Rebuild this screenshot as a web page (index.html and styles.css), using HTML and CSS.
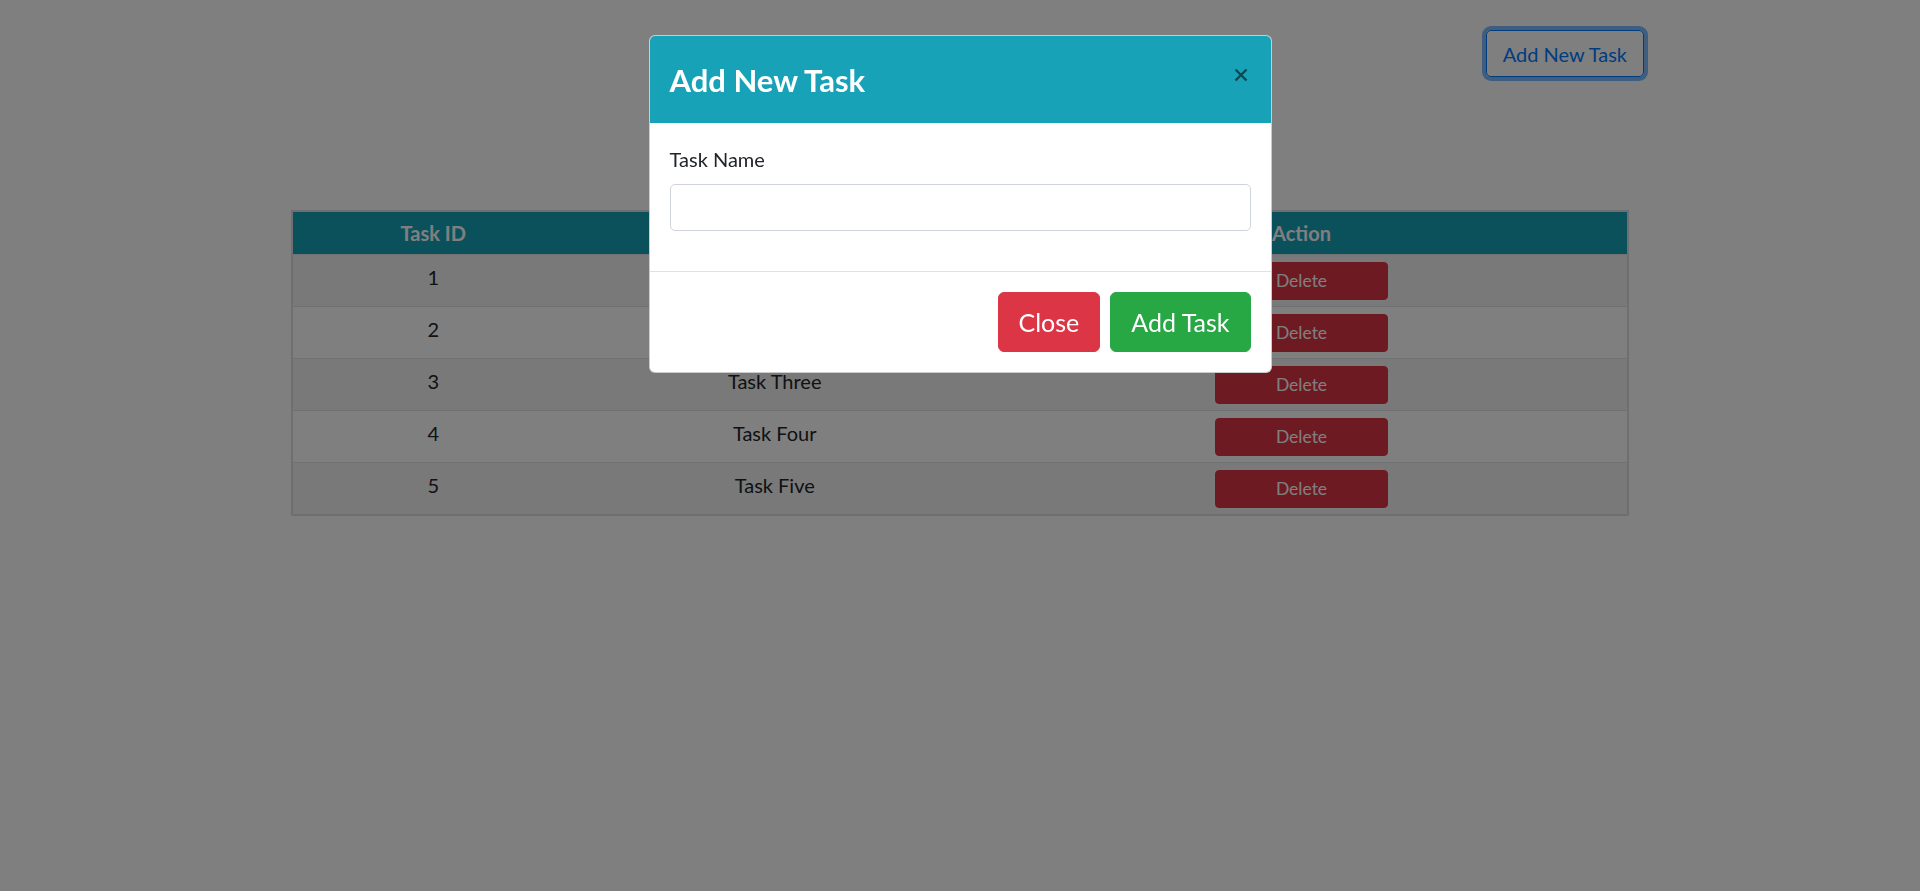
FILE: index.html
```html
<!DOCTYPE html>
<html lang="en">
<head>
<meta charset="utf-8">
<title>Tasks</title>
<link rel="stylesheet" href="styles.css">
</head>
<body>
<div class="page">
  <div class="topbar">
    <button class="btn btn-outline-primary" type="button">Add New Task</button>
  </div>
  <table class="tasks">
    <colgroup>
      <col class="col-id">
      <col class="col-name">
      <col class="col-action">
    </colgroup>
    <thead>
      <tr><th>Task ID</th><th>Task Name</th><th>Action</th></tr>
    </thead>
    <tbody>
      <tr><td>1</td><td>Task One</td><td><button class="btn-delete" type="button">Delete</button></td></tr>
      <tr><td>2</td><td>Task Two</td><td><button class="btn-delete" type="button">Delete</button></td></tr>
      <tr><td>3</td><td>Task Three</td><td><button class="btn-delete" type="button">Delete</button></td></tr>
      <tr><td>4</td><td>Task Four</td><td><button class="btn-delete" type="button">Delete</button></td></tr>
      <tr><td>5</td><td>Task Five</td><td><button class="btn-delete" type="button">Delete</button></td></tr>
    </tbody>
  </table>
</div>

<div class="backdrop"></div>

<div class="modal">
  <div class="modal-header">
    <h2 class="modal-title">Add New Task</h2>
    <button class="modal-close" type="button" aria-label="Close">
      <svg width="14" height="14" viewBox="0 0 14 14"><path d="M1.5 1.5 L12.5 12.5 M12.5 1.5 L1.5 12.5" stroke="#000" stroke-width="2.4" stroke-linecap="butt" fill="none"/></svg>
    </button>
  </div>
  <div class="modal-body">
    <label class="field-label" for="taskName">Task Name</label>
    <input class="field-input" id="taskName" type="text">
  </div>
  <div class="modal-footer">
    <button class="btn-lg btn-danger" type="button">Close</button>
    <button class="btn-lg btn-success" type="button">Add Task</button>
  </div>
</div>
</body>
</html>
```
FILE: styles.css
```css
* { box-sizing: border-box; }

html, body {
  margin: 0;
  padding: 0;
  background: #ffffff;
}

body {
  font-family: Lato, "Noto Sans", "Liberation Sans", sans-serif;
  font-size: 20px;
  line-height: 1.5;
  color: #212529;
  height: 891px;
  overflow: hidden;
}

.page {
  width: 100%;
}

.topbar {
  max-width: 1368px;
  margin: 0 auto;
  padding-top: 30px;
  display: flex;
  justify-content: flex-end;
}

.btn {
  font-family: inherit;
  font-size: 20px;
  line-height: 30px;
  padding: 7.5px 16px;
  border-radius: 5px;
  background: transparent;
  cursor: pointer;
}

.btn-outline-primary {
  color: #007bff;
  border: 1px solid #007bff;
  box-shadow: 0 0 0 4px rgba(0, 123, 255, 0.5);
}

.tasks {
  width: 1338px;
  margin: 133px auto 0;
  border-collapse: collapse;
  table-layout: fixed;
  border: 2px solid #dcdfe2;
}

.col-id { width: 281px; }
.col-name { width: 402px; }
.col-action { width: 651px; }

.tasks th {
  background: #17a2b8;
  color: #ffffff;
  font-weight: 700;
  text-align: center;
  padding: 6px 0 6px;
  line-height: 30px;
}

.tasks td {
  text-align: center;
  vertical-align: top;
  border-top: 1px solid #dee2e6;
  padding: 7px 0 6px;
  line-height: 30px;
  height: 52px;
}

.tasks tbody tr:nth-child(odd) td {
  background: #f2f2f2;
}

.btn-delete {
  display: inline-block;
  width: 173px;
  height: 38px;
  font-family: inherit;
  font-size: 17.5px;
  line-height: 26px;
  padding: 5px 10px;
  color: #ffffff;
  background: #dc3545;
  border: 1px solid #dc3545;
  border-radius: 4px;
  vertical-align: top;
}

.backdrop {
  position: fixed;
  inset: 0;
  background: rgba(0, 0, 0, 0.5);
}

.modal {
  position: fixed;
  top: 35px;
  left: 0;
  right: 0;
  margin: 0 auto;
  width: 623px;
  background: #ffffff;
  border: 1px solid rgba(0, 0, 0, 0.2);
  border-radius: 6px;
  overflow: hidden;
}

.modal-header {
  height: 87px;
  background: #17a2b8;
  display: flex;
  align-items: center;
  justify-content: space-between;
  padding: 2px 20px 0;
}

.modal-title {
  margin: 0;
  font-size: 31px;
  font-weight: 700;
  line-height: 1.2;
  color: #ffffff;
}

.modal-close {
  width: 14px;
  height: 14px;
  padding: 0;
  margin: 0 3px 12px 0;
  border: 0;
  background: transparent;
  opacity: 0.55;
  display: flex;
}

.modal-body {
  padding: 21px 20px 20px;
}

.field-label {
  display: block;
  font-size: 20px;
  line-height: 30px;
  margin-bottom: 10px;
}

.field-input {
  display: block;
  width: 100%;
  height: 47px;
  border: 1px solid #ced4da;
  border-radius: 5px;
  font-family: inherit;
  font-size: 20px;
  padding: 7px 15px;
  margin-bottom: 20px;
  background: #ffffff;
}

.modal-footer {
  border-top: 1px solid #dee2e6;
  padding: 15px;
  display: flex;
  justify-content: flex-end;
}

.btn-lg {
  font-family: inherit;
  font-size: 25px;
  line-height: 37px;
  height: 60px;
  padding: 10px 20px;
  margin: 5px;
  border-radius: 6px;
  color: #ffffff;
  cursor: pointer;
}

.btn-danger {
  background: #dc3545;
  border: 1px solid #dc3545;
}

.btn-success {
  background: #28a745;
  border: 1px solid #28a745;
}
```
